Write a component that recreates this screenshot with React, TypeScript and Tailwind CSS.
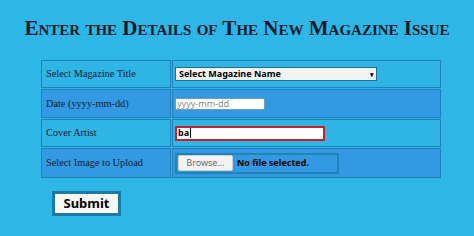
export default function App() {
  const rows = [
    { label: "Select Magazine Title", dark: false, h: "h-[28px]" },
    { label: "Date (yyyy-mm-dd)", dark: true, h: "h-[29px]" },
    { label: "Cover Artist", dark: false, h: "h-[28px]" },
    { label: "Select Image to Upload", dark: true, h: "h-[30px]" },
  ];

  const field = (i: number) => {
    if (i === 0)
      return (
        <div className="flex h-[14px] w-[202px] items-center justify-between border border-[#1d6f95] bg-[#f4f4f4] pl-[3px] pr-[2px] text-[9px] font-bold text-black">
          <span>Select Magazine Name</span>
          <span className="text-[7px] leading-none">▾</span>
        </div>
      );
    if (i === 1)
      return (
        <div className="flex h-[12px] w-[90px] items-center border border-[#6a9fb8] bg-white pl-[1px] text-[9px] text-[#8a8a8a]">
          yyyy-mm-dd
        </div>
      );
    if (i === 2)
      return (
        <div className="flex h-[15px] w-[150px] items-center border-2 border-[#c8202a] bg-white pl-[1px] text-[9px] font-bold text-black">
          ba<span className="ml-[1px] inline-block h-[10px] w-px bg-black" />
        </div>
      );
    return (
      <div className="flex h-[21px] w-[164px] items-center gap-[4px] border-2 border-[#1f85b5] pl-[1px] text-[9px] font-bold text-black">
        <span className="flex h-[16px] w-[55px] items-center justify-center rounded-[2px] border border-[#cfcfcf] bg-[#f3f3f3] font-normal text-[#6b6b6b]">
          Browse...
        </span>
        <span>No file selected.</span>
      </div>
    );
  };

  return (
    <div className="h-[236px] w-[474px] bg-[#2db6e6] font-['Liberation_Serif',serif]">
      <h1 className="pt-[16px] text-center text-[21px] font-bold leading-[24px] text-[#0b1a2a] [font-variant:small-caps]">
        Enter the Details of The New Magazine Issue
      </h1>
      <table className="ml-[40px] mt-[19px] border-separate border-spacing-[1px]">
        <tbody>
          {rows.map((r, i) => (
            <tr key={r.label} className={r.dark ? "bg-[#3399e3]" : "bg-[#2fb4e6]"}>
              <td
                className={`w-[130px] border border-[#2180b8] pl-[4px] text-[10.3px] text-[#0d2233] ${r.h}`}
              >
                {r.label}
              </td>
              <td className="w-[269px] border border-[#2180b8] pl-[2px] font-['Noto_Sans',sans-serif]">
                {field(i)}
              </td>
            </tr>
          ))}
        </tbody>
      </table>
      <button className="ml-[52px] mt-[12px] h-[25px] w-[69px] border-[3px] border-[#1a7ca6] bg-[#f7f7f5] font-['Noto_Sans',sans-serif] text-[13px] font-bold text-black">
        Submit
      </button>
    </div>
  );
}
